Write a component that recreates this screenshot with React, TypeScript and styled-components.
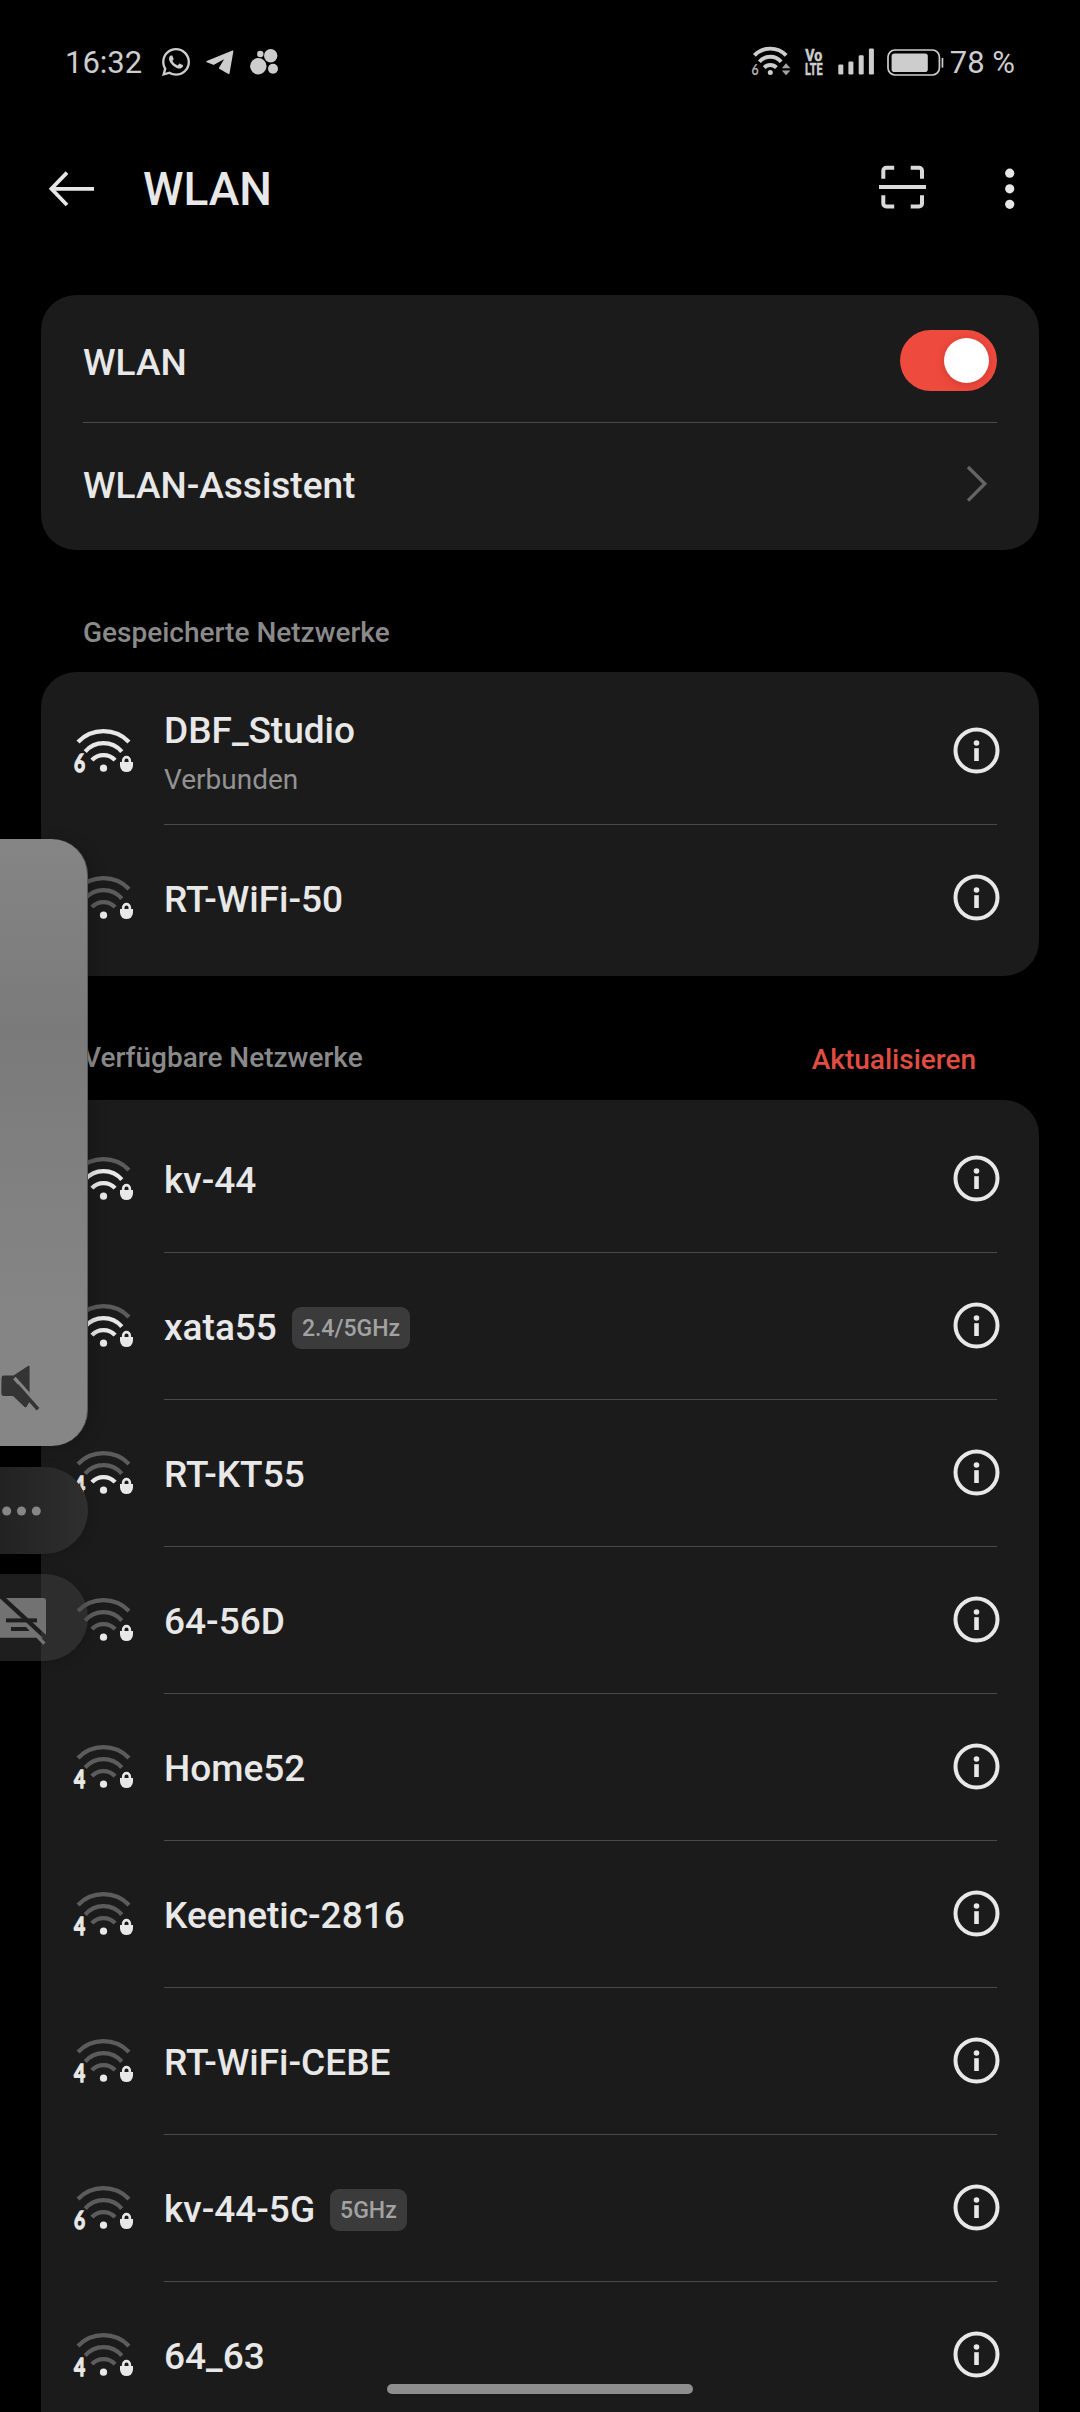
import React from 'react';
import styled, { createGlobalStyle } from 'styled-components';
import { FaWhatsapp } from 'react-icons/fa';

const GlobalStyle = createGlobalStyle`
  * { box-sizing: border-box; }
  html, body { margin: 0; background: #000; }
  body { font-family: Roboto, "Noto Sans", sans-serif; }
`;

const Screen = styled.div`
  position: relative;
  display: flex;
  flex-direction: column;
  width: 1080px;
  height: 2412px;
  overflow: hidden;
  background: #000;
  color: #e8e8e8;
`;

/* ---------- status bar ---------- */

const StatusBar = styled.div`
  display: flex;
  flex: none;
  justify-content: space-between;
  align-items: center;
  height: 124px;
  padding: 0 65px 0 65px;
  color: #cdcdcd;
`;

const StatusGroup = styled.div<{ $gap: number }>`
  display: flex;
  align-items: center;
  gap: ${(p) => p.$gap}px;

  svg {
    display: block;
    flex: none;
    overflow: visible;
  }
`;

const StatusText = styled.span<{ $before?: number; $after?: number }>`
  margin-left: ${(p) => p.$before ?? 0}px;
  margin-right: ${(p) => p.$after ?? 0}px;
  padding-top: 1px;
  font-size: 31px;
  line-height: 38px;
  white-space: nowrap;
`;

const WhatsappMark = styled.span`
  display: flex;
  justify-content: center;
  width: 28px;
`;

/* ---------- header ---------- */

const Header = styled.header`
  display: flex;
  flex: none;
  align-items: center;
  height: 129px;
  margin-bottom: 42px;
  padding: 0 65px 0 48px;
`;

const IconButton = styled.button<{ $lift?: number }>`
  display: flex;
  flex: none;
  margin-bottom: ${(p) => p.$lift ?? 0}px;
  padding: 0;
  border: 0;
  background: none;
  color: #e8e8e8;

  svg {
    display: block;
  }
`;

const Title = styled.h1`
  flex: 1;
  margin: 0 0 0 49px;
  font-size: 46px;
  font-weight: 500;
  line-height: 56px;
`;

const HeaderActions = styled.div`
  display: flex;
  align-items: center;
  gap: 78px;
`;

/* ---------- cards ---------- */

const Card = styled.section<{ $padTop?: number; $padBottom?: number }>`
  flex: none;
  margin: 0 41px;
  padding: ${(p) => p.$padTop ?? 0}px 0 ${(p) => p.$padBottom ?? 0}px;
  border-radius: 35px;
  background: #1b1b1b;
`;

const SettingRow = styled.div<{ $last?: boolean }>`
  display: flex;
  align-items: center;
  justify-content: space-between;
  height: 127px;
  padding: ${(p) => (p.$last ? '0 42px 6px' : '4px 42px 0')};
`;

const Divider = styled.hr<{ $inset: number }>`
  height: 1px;
  margin: 0 42px 0 ${(p) => p.$inset}px;
  border: 0;
  background: #4a4a4a;
`;

const Label = styled.span`
  font-size: 37px;
  font-weight: 500;
  line-height: 44px;
  white-space: nowrap;
`;

const SettingLabel = styled(Label)`
  padding-top: 5px;
`;

const Toggle = styled.span`
  display: flex;
  justify-content: flex-end;
  width: 97px;
  height: 61px;
  padding: 8px;
  border-radius: 31px;
  background: #ef4a3e;
`;

const Knob = styled.span`
  width: 45px;
  height: 45px;
  border-radius: 50%;
  background: #fff;
  box-shadow: 0 2px 8px rgba(120, 0, 0, 0.25);
`;

const ChevronBox = styled.span`
  display: flex;
  margin-right: 9px;
`;

/* ---------- section headings ---------- */

const SectionHead = styled.div<{ $height: number; $bottom: number }>`
  display: flex;
  flex: none;
  align-items: flex-end;
  justify-content: space-between;
  height: ${(p) => p.$height}px;
  padding: 0 104px ${(p) => p.$bottom}px 83px;
`;

const SectionTitle = styled.h2`
  margin: 0 0 2px;
  color: #8a8a8a;
  font-size: 28px;
  font-weight: 500;
  line-height: 36px;
`;

const Refresh = styled.button`
  padding: 0;
  border: 0;
  background: none;
  color: #e04d42;
  font: 500 28px/36px Roboto, "Noto Sans", sans-serif;
`;

/* ---------- network rows ---------- */

const NetworkRow = styled.div`
  display: flex;
  align-items: center;
  height: 146px;
  padding: 0 39px 0 33px;

  svg {
    display: block;
    flex: none;
    overflow: visible;
  }
`;

const NetworkText = styled.div`
  display: flex;
  flex: 1;
  flex-direction: column;
  gap: 9px;
  padding-top: 4px;
  margin-left: 30px;
`;

const NameLine = styled.div`
  display: flex;
  align-items: center;
  gap: 15px;
`;

const Status = styled.span`
  color: #929292;
  font-size: 28px;
  line-height: 36px;
`;

const Band = styled.span`
  height: 42px;
  padding: 0 10px;
  border-radius: 9px;
  background: #3b3b3b;
  color: #a2a2a2;
  font-size: 23px;
  font-weight: 500;
  line-height: 44px;
`;

/* ---------- floating overlays ---------- */

const VolumePanel = styled.div`
  position: absolute;
  top: 839px;
  left: 0;
  width: 88px;
  height: 607px;
  border-right: 1px solid #5a5a5a;
  border-radius: 0 36px 36px 0;
  background: linear-gradient(180deg, #858585 0%, #7a7a7a 32%, #808080 55%, #858585 80%, #868686 100%);
  box-shadow: 4px 2px 16px rgba(0, 0, 0, 0.18);
`;

const MutePosition = styled.div`
  position: absolute;
  left: 0;
  bottom: 34px;

  svg {
    display: block;
  }
`;

const SidePill = styled.div<{ $top: number; $bg: string; $nudge?: number }>`
  position: absolute;
  top: ${(p) => p.$top}px;
  left: 0;
  display: flex;
  align-items: center;
  width: 88px;
  height: 87px;
  padding-top: ${(p) => p.$nudge ?? 0}px;
  border-radius: 0 43.5px 43.5px 0;
  background: ${(p) => p.$bg};
  box-shadow: 2px 2px 12px rgba(0, 0, 0, 0.15);

  svg {
    display: block;
  }
`;

const HomeBar = styled.div`
  position: absolute;
  left: 387px;
  bottom: 18px;
  width: 306px;
  height: 10px;
  border-radius: 5px;
  background: #8e8e8e;
`;

/* ---------- drawings ---------- */

const Telegram = () => (
  <svg width="28" height="25" viewBox="0 0 28 25">
    <path
      d="M1 11.6 L26.7 1.2 L22.8 23.5 L13.6 18.2 L20 7.4 L7.6 14.2 Z"
      fill="currentColor"
      stroke="currentColor"
      strokeWidth="1.4"
      strokeLinejoin="round"
    />
  </svg>
);

const Bubbles = () => (
  <svg width="28" height="28" viewBox="0 0 28 28">
    <g fill="currentColor">
      <circle cx="8.3" cy="18.3" r="8.2" />
      <circle cx="20.7" cy="7.7" r="6.7" />
      <circle cx="10.3" cy="6" r="3.2" />
      <circle cx="23" cy="20.7" r="5" />
    </g>
  </svg>
);

const StatusWifi = () => (
  <svg width="40" height="32" viewBox="0 0 40 32">
    <g fill="none" stroke="currentColor" strokeWidth="3.9">
      <path d="M2.4 9.4 A22 22 0 0 1 34.2 9.4" />
      <path d="M7.4 15.7 A14.5 14.5 0 0 1 29.2 15.7" />
      <path d="M12.2 21.6 A8.5 8.5 0 0 1 24.4 21.6" />
    </g>
    <circle cx="18.3" cy="26.4" r="2.5" fill="currentColor" />
    <text transform="translate(-0.6 28.8) scale(.82 1)" fontFamily="Lato" fontWeight="700" fontSize="15" fill="#b0b0b0">6</text>
    <path d="M34 17.2 L38.4 22.2 H29.8 Z M34 29.2 L38.4 24.6 H29.8 Z" fill="#a4a4a4" />
  </svg>
);

const VoLte = () => (
  <svg width="20" height="28" viewBox="0 0 20 28">
    <g fill="currentColor" stroke="currentColor" strokeWidth="0.5" fontFamily="Roboto" fontWeight="700" fontSize="16.5">
      <text transform="translate(0.2 12.6) scale(.86 1)">Vo</text>
      <text transform="translate(0 27) scale(.66 1)">LTE</text>
    </g>
  </svg>
);

const Signal = () => (
  <svg width="36" height="28" viewBox="0 0 36 28">
    <g fill="currentColor">
      <rect x="0.3" y="16.5" width="5" height="10" rx="1.2" />
      <rect x="10.4" y="13.5" width="5" height="13" rx="1.2" />
      <rect x="20.7" y="7.3" width="5" height="19.2" rx="1.2" />
      <rect x="30.9" y="0.5" width="5" height="26" rx="1.2" />
    </g>
  </svg>
);

const Battery = () => (
  <svg width="57" height="27" viewBox="0 0 57 27">
    <rect x="1" y="1" width="51.4" height="25" rx="7" fill="none" stroke="currentColor" strokeWidth="1.7" />
    <rect x="4.6" y="4.4" width="36.2" height="18.6" rx="2.8" fill="currentColor" />
    <rect x="54.6" y="9" width="1.7" height="9.6" fill="currentColor" />
  </svg>
);

const BackArrow = () => (
  <svg width="46" height="36" viewBox="0 0 46 36" fill="none" stroke="currentColor" strokeWidth="3.8">
    <path d="M46 17.8 H4" />
    <path d="M19 1.6 L3.4 17.8 L19 34" />
  </svg>
);

const ScanIcon = () => (
  <svg width="48" height="44" viewBox="0 0 48 44" fill="none" stroke="currentColor" strokeWidth="4" opacity="0.94">
    <path d="M4.3 13.8 V5.7 a3 3 0 0 1 3 -3 H15.2" />
    <path d="M31.7 2.7 H40 a3 3 0 0 1 3 3 V13.8" />
    <path d="M43 30.2 V38.4 a3 3 0 0 1 -3 3 H31.7" />
    <path d="M15.2 41.4 H7.3 a3 3 0 0 1 -3 -3 V30.2" />
    <path d="M0 22 H47" />
  </svg>
);

const MoreIcon = () => (
  <svg width="10" height="42" viewBox="0 0 10 42" fill="currentColor">
    <circle cx="4.7" cy="5.2" r="4.6" />
    <circle cx="4.7" cy="20.8" r="4.6" />
    <circle cx="4.7" cy="36.3" r="4.6" />
  </svg>
);

const Chevron = () => (
  <svg width="22" height="38" viewBox="0 0 22 38" fill="none" stroke="#646464" strokeWidth="3.4">
    <path d="M2 2 L18.8 18.8 L2 35.6" />
  </svg>
);

const InfoIcon = () => (
  <svg width="47" height="46" viewBox="0 0 47 46">
    <circle cx="23.5" cy="22.5" r="21" fill="none" stroke="#e8e8e8" strokeWidth="4" />
    <circle cx="23.5" cy="15" r="2.8" fill="#e8e8e8" />
    <rect x="21.2" y="20.2" width="4.6" height="12.8" fill="#e8e8e8" />
  </svg>
);

const ON = '#e8e8e8';
const OFF = '#5c5c5c';

const WifiIcon = ({ level, gen }: { level: number; gen?: string }) => (
  <svg width="60" height="44" viewBox="0 0 60 44">
    <g fill="none" strokeWidth="4.2">
      <path d="M4 13 A35.5 35.5 0 0 1 55 13" stroke={level > 2 ? ON : OFF} />
      <path d="M11.2 22.6 A24 24 0 0 1 47.8 22.6" stroke={level > 1 ? ON : OFF} />
      <path d="M17.9 31.2 A15.6 15.6 0 0 1 41.1 31.2" stroke={level > 0 ? ON : OFF} />
    </g>
    <circle cx="29.5" cy="39.2" r="3.6" fill={ON} />
    <path d="M46 33 H59 V36.6 A6.5 6.5 0 0 1 46 36.6 Z" fill={ON} />
    <path d="M49.2 34 V31.4 A3.3 3.3 0 0 1 55.8 31.4 V34" fill="none" stroke={ON} strokeWidth="2.6" />
    {gen && (
      <text
        transform="translate(0 42.5) scale(.8 1)"
        fontFamily="Lato"
        fontWeight="700"
        fontSize="24"
        fill={ON}
        stroke={ON}
        strokeWidth="1.3"
      >
        {gen}
      </text>
    )}
  </svg>
);

const MuteIcon = () => (
  <svg width="42" height="48" viewBox="0 0 42 48">
    <path d="M1.5 14 Q1.5 11.6 4 11.6 H13.4 L28 2 Q29.6 1.2 29.6 3 V38 L27.8 40.4 Q26.6 44 24.6 43 L13 32 H3.6 Q1.3 32 1.3 29.6 Z" fill="#343434" />
    <path d="M14.4 14 L33 35" stroke="#858585" strokeWidth="3.4" />
    <path d="M17 21.5 L38 45.3" stroke="#343434" strokeWidth="3.6" />
  </svg>
);

const EllipsisIcon = () => (
  <svg width="44" height="12" viewBox="0 0 44 12" fill="#868686">
    <circle cx="6.7" cy="6" r="4.5" />
    <circle cx="21.5" cy="6" r="4.5" />
    <circle cx="36.3" cy="6" r="4.5" />
  </svg>
);

const CaptionsOffIcon = () => (
  <svg width="50" height="54" viewBox="0 0 50 54">
    <defs>
      <mask id="captionCut">
        <rect width="50" height="54" fill="#fff" />
        <rect x="6" y="24.4" width="31" height="4" fill="#000" />
        <rect x="11" y="33" width="18" height="4" fill="#000" />
        <path d="M-1 0.5 L49 46.5" stroke="#000" strokeWidth="4.4" />
      </mask>
    </defs>
    <g mask="url(#captionCut)">
      <path d="M-2 4 H43.4 Q46 4 46 6.6 V43.7 H-2 Z" fill="#727272" />
    </g>
    <path d="M26 30.6 L44.4 49.6" stroke="#727272" strokeWidth="3.4" />
  </svg>
);

/* ---------- data ---------- */

type Network = { name: string; level: number; gen?: string; status?: string; band?: string };

const saved: Network[] = [
  { name: 'DBF_Studio', level: 3, gen: '6', status: 'Verbunden' },
  { name: 'RT-WiFi-50', level: 0 },
];

const available: Network[] = [
  { name: 'kv-44', level: 2 },
  { name: 'xata55', level: 2, band: '2.4/5GHz' },
  { name: 'RT-KT55', level: 1, gen: '4' },
  { name: '64-56D', level: 0 },
  { name: 'Home52', level: 0, gen: '4' },
  { name: 'Keenetic-2816', level: 0, gen: '4' },
  { name: 'RT-WiFi-CEBE', level: 0, gen: '4' },
  { name: 'kv-44-5G', level: 0, gen: '6', band: '5GHz' },
  { name: '64_63', level: 0, gen: '4' },
];

const NetworkList = ({ items, padBottom = 5 }: { items: Network[]; padBottom?: number }) => (
  <Card $padTop={6} $padBottom={padBottom}>
    {items.map((n, i) => (
      <React.Fragment key={n.name}>
        {i > 0 && <Divider $inset={123} />}
        <NetworkRow>
          <WifiIcon level={n.level} gen={n.gen} />
          <NetworkText>
            <NameLine>
              <Label>{n.name}</Label>
              {n.band && <Band>{n.band}</Band>}
            </NameLine>
            {n.status && <Status>{n.status}</Status>}
          </NetworkText>
          <InfoIcon />
        </NetworkRow>
      </React.Fragment>
    ))}
  </Card>
);

export default function App() {
  return (
    <Screen>
      <GlobalStyle />
      <StatusBar>
        <StatusGroup $gap={16}>
          <StatusText $after={4}>16:32</StatusText>
          <WhatsappMark>
            <FaWhatsapp size={32} />
          </WhatsappMark>
          <Telegram />
          <Bubbles />
        </StatusGroup>
        <StatusGroup $gap={13}>
          <StatusWifi />
          <VoLte />
          <Signal />
          <Battery />
          <StatusText $before={-7}>78 %</StatusText>
        </StatusGroup>
      </StatusBar>

      <Header>
        <IconButton aria-label="Zurück">
          <BackArrow />
        </IconButton>
        <Title>WLAN</Title>
        <HeaderActions>
          <IconButton aria-label="QR-Code scannen" $lift={4}>
            <ScanIcon />
          </IconButton>
          <IconButton aria-label="Mehr">
            <MoreIcon />
          </IconButton>
        </HeaderActions>
      </Header>

      <Card>
        <SettingRow>
          <SettingLabel>WLAN</SettingLabel>
          <Toggle>
            <Knob />
          </Toggle>
        </SettingRow>
        <Divider $inset={42} />
        <SettingRow $last>
          <SettingLabel>WLAN-Assistent</SettingLabel>
          <ChevronBox>
            <Chevron />
          </ChevronBox>
        </SettingRow>
      </Card>

      <SectionHead $height={122} $bottom={19}>
        <SectionTitle>Gespeicherte Netzwerke</SectionTitle>
      </SectionHead>
      <NetworkList items={saved} />

      <SectionHead $height={124} $bottom={22}>
        <SectionTitle>Verfügbare Netzwerke</SectionTitle>
        <Refresh>Aktualisieren</Refresh>
      </SectionHead>
      <NetworkList items={available} padBottom={60} />

      <VolumePanel>
        <MutePosition>
          <MuteIcon />
        </MutePosition>
      </VolumePanel>
      <SidePill $top={1467} $bg="linear-gradient(90deg, #222222, #2f2f2f)">
        <EllipsisIcon />
      </SidePill>
      <SidePill $top={1574} $bg="rgba(68, 68, 68, 0.44)" $nudge={6}>
        <CaptionsOffIcon />
      </SidePill>
      <HomeBar />
    </Screen>
  );
}
